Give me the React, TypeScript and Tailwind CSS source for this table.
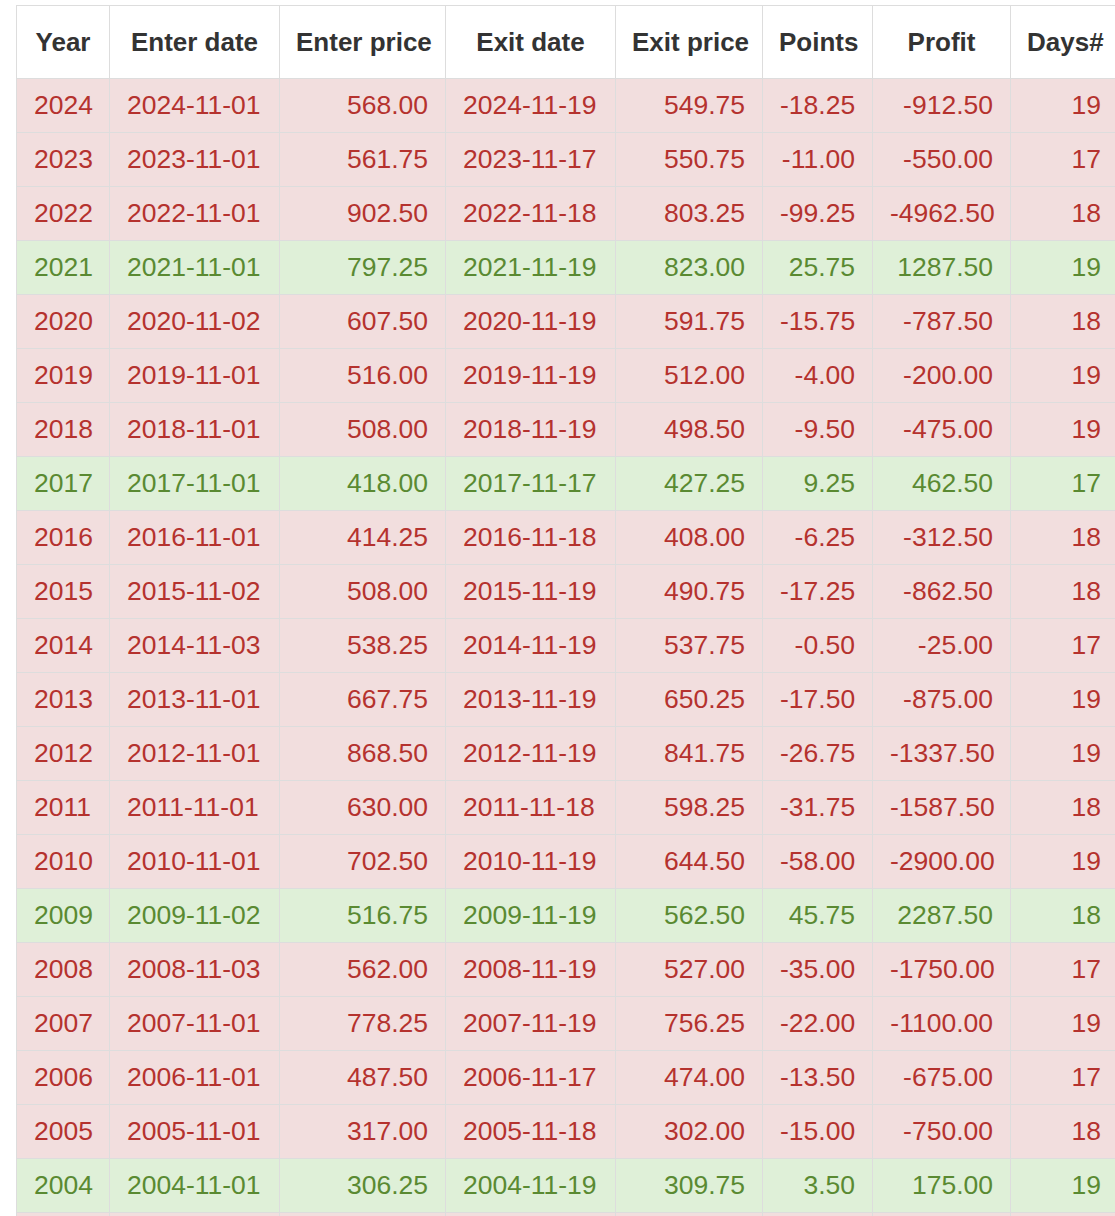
const rows: string[][] = [
  ["2024", "2024-11-01", "568.00", "2024-11-19", "549.75", "-18.25", "-912.50", "19"],
  ["2023", "2023-11-01", "561.75", "2023-11-17", "550.75", "-11.00", "-550.00", "17"],
  ["2022", "2022-11-01", "902.50", "2022-11-18", "803.25", "-99.25", "-4962.50", "18"],
  ["2021", "2021-11-01", "797.25", "2021-11-19", "823.00", "25.75", "1287.50", "19"],
  ["2020", "2020-11-02", "607.50", "2020-11-19", "591.75", "-15.75", "-787.50", "18"],
  ["2019", "2019-11-01", "516.00", "2019-11-19", "512.00", "-4.00", "-200.00", "19"],
  ["2018", "2018-11-01", "508.00", "2018-11-19", "498.50", "-9.50", "-475.00", "19"],
  ["2017", "2017-11-01", "418.00", "2017-11-17", "427.25", "9.25", "462.50", "17"],
  ["2016", "2016-11-01", "414.25", "2016-11-18", "408.00", "-6.25", "-312.50", "18"],
  ["2015", "2015-11-02", "508.00", "2015-11-19", "490.75", "-17.25", "-862.50", "18"],
  ["2014", "2014-11-03", "538.25", "2014-11-19", "537.75", "-0.50", "-25.00", "17"],
  ["2013", "2013-11-01", "667.75", "2013-11-19", "650.25", "-17.50", "-875.00", "19"],
  ["2012", "2012-11-01", "868.50", "2012-11-19", "841.75", "-26.75", "-1337.50", "19"],
  ["2011", "2011-11-01", "630.00", "2011-11-18", "598.25", "-31.75", "-1587.50", "18"],
  ["2010", "2010-11-01", "702.50", "2010-11-19", "644.50", "-58.00", "-2900.00", "19"],
  ["2009", "2009-11-02", "516.75", "2009-11-19", "562.50", "45.75", "2287.50", "18"],
  ["2008", "2008-11-03", "562.00", "2008-11-19", "527.00", "-35.00", "-1750.00", "17"],
  ["2007", "2007-11-01", "778.25", "2007-11-19", "756.25", "-22.00", "-1100.00", "19"],
  ["2006", "2006-11-01", "487.50", "2006-11-17", "474.00", "-13.50", "-675.00", "17"],
  ["2005", "2005-11-01", "317.00", "2005-11-18", "302.00", "-15.00", "-750.00", "18"],
  ["2004", "2004-11-01", "306.25", "2004-11-19", "309.75", "3.50", "175.00", "19"],
];

const headers = ["Year", "Enter date", "Enter price", "Exit date", "Exit price", "Points", "Profit", "Days#"];
const widths = ["w-[93px]", "w-[170px]", "w-[166px]", "w-[170px]", "w-[147px]", "w-[110px]", "w-[138px]", "w-[108px]"];
const align = ["text-left", "text-left", "text-right", "text-left", "text-right", "text-right", "text-right", "text-right"];

export default function App() {
  return (
    <div className="h-[1216px] w-[1115px] overflow-hidden bg-white pl-[16px] pt-[5px] font-['Liberation_Sans',Arial,sans-serif]">
      <table className="w-[1102px] table-fixed border-collapse border border-[#ddd] text-[26.5px]">
        <colgroup>
          {widths.map((w, i) => (
            <col key={i} className={w} />
          ))}
        </colgroup>
        <thead>
          <tr className="h-[73px]">
            {headers.map((h) => (
              <th key={h} className="border border-[#ddd] px-[16px] text-center text-[26px] font-bold text-[#333] whitespace-nowrap">
                {h}
              </th>
            ))}
          </tr>
        </thead>
        <tbody>
          {rows.map((r) => {
            const win = !r[5].startsWith("-");
            return (
              <tr
                key={r[0]}
                className={`h-[54px] ${win ? "bg-[#dff0d8] text-[#5a8a32]" : "bg-[#f2dede] text-[#b5322e]"}`}
              >
                {r.map((c, i) => (
                  <td key={i} className={`border border-[#ddd] px-[17px] whitespace-nowrap ${align[i]}`}>
                    {c}
                  </td>
                ))}
              </tr>
            );
          })}
          {/* next row peeks in at the bottom edge */}
          <tr className="h-[54px] bg-[#f2dede]">
            {headers.map((h) => (
              <td key={h} className="border border-[#ddd]" />
            ))}
          </tr>
        </tbody>
      </table>
    </div>
  );
}
